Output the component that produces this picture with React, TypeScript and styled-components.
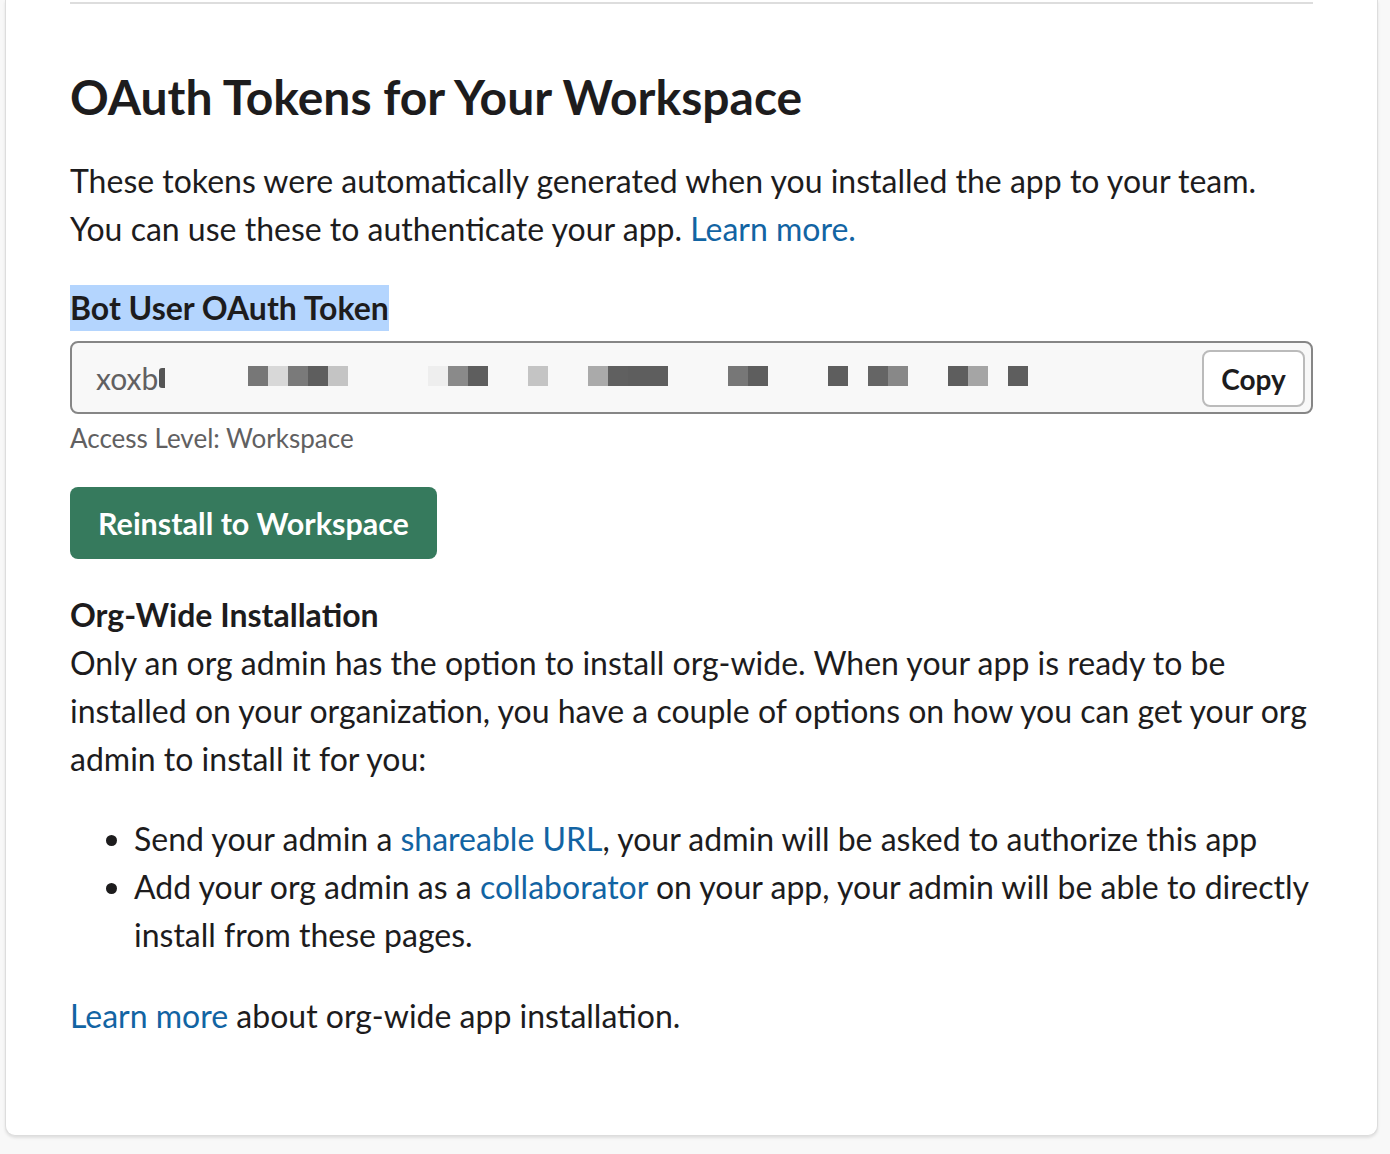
import React from "react";
import styled, { createGlobalStyle } from "styled-components";

const GlobalStyle = createGlobalStyle`
  html, body {
    margin: 0;
    padding: 0;
    background: #f8f8f8;
  }
  body {
    font-family: Lato, "Open Sans", "Liberation Sans", sans-serif;
    color: #1d1c1d;
    -webkit-font-smoothing: antialiased;
  }
`;

const Page = styled.div`
  padding: 0 12px 19px 5px;
  min-height: 1154px;
  box-sizing: border-box;
`;

const Card = styled.section`
  background: #fff;
  border: 1px solid #dddddd;
  border-top: none;
  border-radius: 0 0 10px 10px;
  box-shadow: 0 2px 3px rgba(0, 0, 0, 0.1);
  padding: 0 64px 95px 64px;
`;

const Rule = styled.hr`
  margin: 0;
  border: none;
  border-top: 2px solid #dddddd;
  position: relative;
  top: 2px;
`;

const Column = styled.div`
  display: flex;
  flex-direction: column;
`;

const Title = styled.h2`
  margin: 65px 0 0;
  font-size: 48px;
  line-height: 60px;
  font-weight: 700;
`;

const Text = styled.p<{ $top?: number }>`
  margin: ${(p) => p.$top ?? 0}px 0 0;
  font-size: 32px;
  line-height: 48px;
  font-weight: 400;
`;

const Link = styled.a`
  color: #1264a3;
  text-decoration: none;
`;

const Label = styled.div`
  margin-top: 32px;
  display: inline-flex;
  align-self: flex-start;
`;

const Selected = styled.span`
  background: #b4d5fe;
  font-size: 32px;
  font-weight: 700;
  line-height: 46px;
`;

const Field = styled.div`
  margin-top: 10px;
  height: 73px;
  box-sizing: border-box;
  border: 2px solid #868686;
  border-radius: 8px;
  background: #f8f8f8;
  display: flex;
  align-items: center;
  padding: 0 6px 0 24px;
`;

const TokenText = styled.span`
  font-size: 30px;
  color: #616061;
  display: flex;
  align-items: center;
`;

const Caret = styled.span`
  display: inline-block;
  width: 6px;
  height: 20px;
  background: #555;
  border-radius: 3px 0 0 3px;
  margin-left: 1px;
`;

const Pixels = styled.div`
  display: flex;
  margin-left: 83px;
  margin-bottom: 3px;
  flex: 1;
`;

const Cell = styled.span<{ $shade: string | null }>`
  width: 20px;
  height: 20px;
  background: ${(p) => p.$shade ?? "transparent"};
`;

const CopyButton = styled.button`
  margin-left: auto;
  margin-top: 2px;
  height: 57px;
  width: 103px;
  box-sizing: border-box;
  background: #fff;
  border: 2px solid #bbbbbb;
  border-radius: 8px;
  font-family: inherit;
  font-size: 28px;
  font-weight: 700;
  color: #1d1c1d;
  padding: 0;
`;

const Hint = styled.div`
  margin-top: 8px;
  font-size: 26px;
  line-height: 32px;
  color: #616061;
`;

const PrimaryButton = styled.button`
  margin-top: 33px;
  align-self: flex-start;
  height: 72px;
  padding: 0 28px;
  background: #367a5d;
  border: none;
  border-radius: 8px;
  color: #fff;
  font-family: inherit;
  font-size: 30.5px;
  font-weight: 700;
`;

const Subhead = styled.h3`
  margin: 32px 0 0;
  font-size: 32px;
  line-height: 48px;
  font-weight: 700;
`;

const List = styled.ul`
  margin: 32px 0 0;
  padding-left: 64px;
  font-size: 32px;
  line-height: 48px;
`;

const Item = styled.li``;

const cells: (string | null)[] = [
  "#777777", "#d8d8d8", "#7a7a7a", "#5e5e5e", "#c4c4c4",
  null, null, null, null,
  "#eeeeee", "#8a8a8a", "#5e5e5e",
  null, null,
  "#c4c4c4",
  null, null,
  "#aaaaaa", "#606060", "#5e5e5e", "#5e5e5e",
  null, null, null,
  "#777777", "#5e5e5e",
  null, null, null,
  "#5e5e5e",
  null,
  "#656565", "#888888",
  null, null,
  "#5e5e5e", "#a5a5a5",
  null,
  "#5e5e5e",
];

export default function App() {
  return (
    <>
      <GlobalStyle />
      <Page>
        <Card>
          <Rule />
          <Column>
            <Title>OAuth Tokens for Your Workspace</Title>
            <Text $top={30}>
              These tokens were automatically generated when you installed the app to your team.
              <br />
              You can use these to authenticate your app. <Link href="#">Learn more.</Link>
            </Text>
            <Label>
              <Selected>Bot User OAuth Token</Selected>
            </Label>
            <Field>
              <TokenText>
                xoxb<Caret />
              </TokenText>
              <Pixels>
                {cells.map((c, i) => (
                  <Cell key={i} $shade={c} />
                ))}
              </Pixels>
              <CopyButton>Copy</CopyButton>
            </Field>
            <Hint>Access Level: Workspace</Hint>
            <PrimaryButton>Reinstall to Workspace</PrimaryButton>
            <Subhead>Org-Wide Installation</Subhead>
            <Text>
              Only an org admin has the option to install org-wide. When your app is ready to be
              installed on your organization, you have a couple of options on how you can get your org
              admin to install it for you:
            </Text>
            <List>
              <Item>
                Send your admin a <Link href="#">shareable URL</Link>, your admin will be asked to
                authorize this app
              </Item>
              <Item>
                Add your org admin as a <Link href="#">collaborator</Link> on your app, your admin will
                be able to directly install from these pages.
              </Item>
            </List>
            <Text $top={33}>
              <Link href="#">Learn more</Link> about org-wide app installation.
            </Text>
          </Column>
        </Card>
      </Page>
    </>
  );
}
